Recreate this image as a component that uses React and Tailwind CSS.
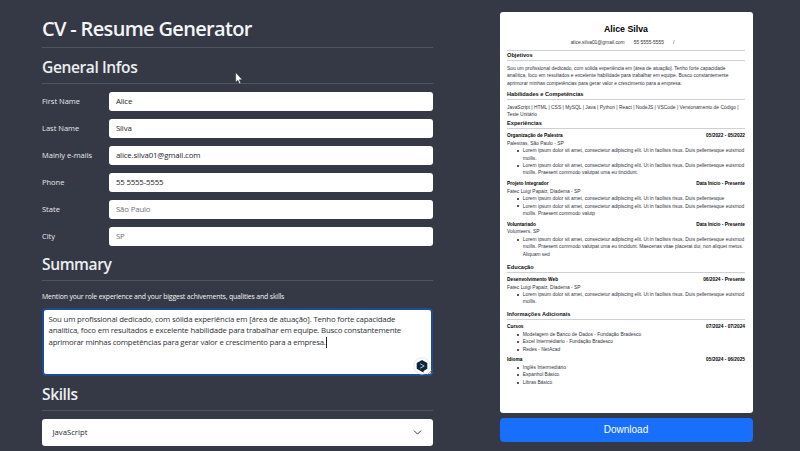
import { ChevronDown } from "lucide-react";

const LOREM = "Lorem ipsum dolor sit amet, consectetur adipiscing elit. Ut in facilisis risus. Duis pellentesque";

const fields = [
  { label: "First Name", value: "Alice" },
  { label: "Last Name", value: "Silva" },
  { label: "Mainly e-mails", value: "alice.silva01@gmail.com" },
  { label: "Phone", value: "55 5555-5555" },
  { label: "State", value: "São Paulo", empty: true },
  { label: "City", value: "SP", empty: true },
];

const experiences = [
  {
    title: "Organização de Palestra",
    date: "05/2022 - 05/2022",
    place: "Palestras, São Paulo - SP",
    items: [
      [LOREM + " euismod", "mollis."],
      [LOREM + " euismod", "mollis. Praesent commodo valutpat uma eu tincidunt."],
    ],
  },
  {
    title: "Projeto Integrador",
    date: "Data Inicio - Presente",
    place: "Fatec Luigi Papaiz, Diadema - SP",
    items: [[LOREM], [LOREM + " euismod", "mollis. Praesent commodo valutp"]],
  },
  {
    title: "Voluntariado",
    date: "Data Inicio - Presente",
    place: "Volunteers, SP",
    items: [
      [
        LOREM + " euismod",
        "mollis. Praesent commodo valutpat uma eu tincidunt. Maecenas vitae placerat dui, non aliquet metus.",
        "Aliquam sed",
      ],
    ],
  },
];

const education = [
  {
    title: "Desenvolvimento Web",
    date: "06/2024 - Presente",
    place: "Fatec Luigi Papaiz, Diadema - SP",
    items: [[LOREM + " euismod", "mollis."]],
  },
];

const extras = [
  {
    title: "Cursos",
    date: "07/2024 - 07/2024",
    items: [["Modelagem de Banco de Dados - Fundação Bradesco"], ["Excel Intermédiario - Fundação Bradesco"], ["Redes - NetAcad"]],
  },
  {
    title: "Idioma",
    date: "05/2024 - 06/2025",
    items: [["Inglês Intermediário"], ["Espanhol Básico"], ["Libras Básico"]],
  },
];

function Heading({ children, className }) {
  return (
    <h2 className={"border-b border-[#50545f] text-[15.6px] font-semibold tracking-[-0.42px] text-[#eceef1] " + className}>
      {children}
    </h2>
  );
}

function Field({ label, value, empty }) {
  return (
    <div className="flex h-[19px] items-center">
      <label className="w-[67.4px] text-[7.5px] text-[#e6e8ec]">{label}</label>
      <div
        className={
          "flex h-full flex-1 items-center rounded-[3px] bg-white pl-[6.5px] text-[7.8px] tracking-[-0.14px] " +
          (empty ? "text-[#6c7077]" : "text-[#212529]")
        }
      >
        {value}
      </div>
    </div>
  );
}

function SectionTitle({ children, className }) {
  return (
    <h3 className={"h-[10px] border-b border-[#cfd0d3] text-[5.65px] leading-[9px] font-bold text-[#111] " + className}>
      {children}
    </h3>
  );
}

function Entry({ title, date, place, items }) {
  return (
    <div>
      <div className="flex h-[7.7px] justify-between text-[4.8px] leading-[7.7px] font-bold text-black">
        <span>{title}</span>
        <span>{date}</span>
      </div>
      {place && <div className="h-[7.6px] leading-[7.6px]">{place}</div>}
      <ul>
        {items.map((lines, i) => (
          <li key={i} className="flex">
            <span className="mt-[2.8px] mr-[4.2px] ml-[9.6px] size-[2px] shrink-0 rounded-full bg-[#222]" />
            <div>
              {lines.map((line) => (
                <div key={line} className="h-[7.4px]">{line}</div>
              ))}
            </div>
          </li>
        ))}
      </ul>
    </div>
  );
}

function Resume() {
  return (
    <div className="h-[401px] rounded-[3px] bg-white px-[7.5px] pt-[10.8px] font-['Liberation_Sans',Arial,sans-serif] text-[4.91px] leading-[7.4px] whitespace-nowrap text-[#30333a]">
      <h1 className="h-[12px] text-center text-[8.8px] leading-[12px] font-bold text-black">Alice Silva</h1>
      <div className="mt-[4px] mr-[7px] flex h-[8px] justify-center gap-[9px] leading-[8px]">
        <span>alice.silva01@gmail.com</span>
        <span>55 5555-5555</span>
        <span>/</span>
      </div>
      <div className="mt-[3px] h-px bg-[#cfd0d3]" />
      <SectionTitle className="">Objetivos</SectionTitle>
      <div className="mt-[3.6px]">
        <p>Sou um profissional dedicado, com sólida experiência em [área de atuação]. Tenho forte capacidade</p>
        <p>analítica, foco em resultados e excelente habilidade para trabalhar em equipe. Busco constantemente</p>
        <p>aprimorar minhas competências para gerar valor e crescimento para a empresa.</p>
      </div>
      <SectionTitle className="mt-[3px]">Habilidades e Competências</SectionTitle>
      <div className="mt-[4px]">
        <p>JavaScript | HTML | CSS | MySQL | Java | Python | React | NodeJS | VSCode | Versionamento de Código |</p>
        <p>Teste Unitário</p>
      </div>
      <SectionTitle className="">Experiências</SectionTitle>
      <div className="mt-[3.2px] flex flex-col gap-[3.2px]">
        {experiences.map((e) => <Entry key={e.title} {...e} />)}
      </div>
      <SectionTitle className="mt-[4.6px]">Educação</SectionTitle>
      <div className="mt-[3.2px]">
        {education.map((e) => <Entry key={e.title} {...e} />)}
      </div>
      <SectionTitle className="mt-[4.3px]">Informações Adicionais</SectionTitle>
      <div className="mt-[3.2px] flex flex-col gap-[3.2px]">
        {extras.map((e) => <Entry key={e.title} {...e} />)}
      </div>
    </div>
  );
}

export default function App() {
  return (
    <div className="relative flex h-[451px] w-[800px] overflow-hidden bg-[#353945] font-['Open_Sans','Noto_Sans',sans-serif] whitespace-nowrap">
      <main className="ml-[42px] w-[391px] shrink-0">
        <h1 className="mt-[11px] h-[37px] border-b border-[#50545f] text-[20px] leading-[36px] font-semibold tracking-[-0.67px] text-[#f4f5f7]">
          CV - Resume Generator
        </h1>
        <Heading className="h-[36px] leading-[38px]">General Infos</Heading>
        <div className="mt-[8px] flex flex-col gap-[8px]">
          {fields.map((f) => <Field key={f.label} {...f} />)}
        </div>
        <Heading className="h-[35px] leading-[37px]">Summary</Heading>
        <p className="mt-[10px] h-[12px] text-[6.9px] leading-[12px] tracking-[-0.155px] text-[#f4f5f7]">
          Mention your role experience and your biggest achivements, qualities and skills
        </p>
        <div className="relative mt-[5px] h-[67.5px] rounded-[4px] border-2 border-[#1e4b93] bg-white pt-[3.5px] pl-[4.5px] text-[7.8px] leading-[11.7px] tracking-[-0.175px] text-[#2b2f36]">
          <p>Sou um profissional dedicado, com sólida experiência em [área de atuação]. Tenho forte capacidade</p>
          <p>analítica, foco em resultados e excelente habilidade para trabalhar em equipe. Busco constantemente</p>
          <p className="flex tracking-[-0.2px]">
            aprimorar minhas competências para gerar valor e crescimento para a empresa.
            <span className="h-[11px] w-px bg-[#222]" />
          </p>
          <svg className="absolute -right-[1.5px] -bottom-px h-[18px] w-[20px]" viewBox="0 0 20 18">
            <circle cx="9" cy="9" r="8.2" fill="#fff" stroke="#dfe1e6" strokeWidth="0.8" />
            <path d="M9 3l5.3 3v5.8l-3.7 2.2v1.6l-2.1-1.2-4.8-2.6V6z" fill="#10253f" />
            <path d="M7.2 6.8l4 2.2-4 2.2" fill="none" stroke="#c6d2de" strokeWidth="0.9" />
            <path d="M19.5 12.5l-5 5M19.5 15.5l-2 2" stroke="#777" strokeWidth="0.7" />
          </svg>
        </div>
        <Heading className="h-[35.5px] leading-[37px]">Skills</Heading>
        <div className="mt-[7.5px] flex h-[27px] items-center justify-between rounded-[3px] bg-white pr-[9.5px] pl-[10.5px] text-[7.7px] text-[#212529]">
          <span className="pt-[1.5px]">JavaScript</span>
          <ChevronDown size={13} strokeWidth={1.8} color="#343a40" />
        </div>
      </main>
      <aside className="mt-[12.3px] ml-[66.5px] w-[253px] shrink-0">
        <Resume />
        <button className="mt-[4.3px] block h-[24px] w-full rounded-[4px] bg-[#176ffb] font-['Liberation_Sans',Arial,sans-serif] text-[10px] text-white">
          Download
        </button>
      </aside>
      <svg className="absolute top-[72px] left-[235px] h-[13px] w-[9px]" viewBox="0 0 8 12">
        <path d="M.5.5v9l2-1.8 1.4 3.1 1.3-.6-1.4-3h2.7z" fill="#fff" stroke="#222" strokeWidth="0.4" />
      </svg>
    </div>
  );
}
